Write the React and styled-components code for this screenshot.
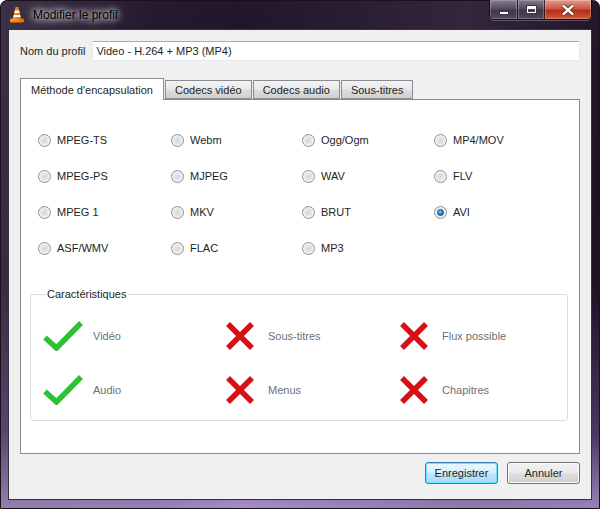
import React from "react";
import styled, { createGlobalStyle, css } from "styled-components";

const Global = createGlobalStyle`
  html, body {
    margin: 0;
    padding: 0;
    width: 600px;
    height: 509px;
    overflow: hidden;
    background: #ffffff;
  }
  * { box-sizing: border-box; }
`;

const Window = styled.div`
  width: 600px;
  height: 509px;
  display: flex;
  flex-direction: column;
  border-radius: 7px 7px 0 0;
  border: 1px solid #1a1020;
  padding: 0 7px 8px 7px;
  font-family: "Liberation Sans", Arial, sans-serif;
  font-size: 11px;
  color: #1e1e1e;
  background:
    linear-gradient(90deg, rgba(110,100,120,0.35) 0%, rgba(60,50,70,0.15) 25%, rgba(0,0,0,0) 40%, rgba(90,75,105,0.3) 78%, rgba(40,30,50,0.1) 100%),
    linear-gradient(180deg, #22162a 0%, #1b0f20 55%, #4d3866 85%, #a58ec9 100%);
`;

const TitleBar = styled.div`
  height: 28px;
  display: flex;
  align-items: flex-start;
`;

const AppIcon = styled.svg`
  width: 16px;
  height: 17px;
  margin: 5px 8px 0 1px;
  flex: none;
`;

const Caption = styled.div`
  margin-top: 7px;
  font-size: 12px;
  color: #000;
  text-shadow: 0 0 6px #fff, 0 0 10px rgba(255,255,255,0.8), 0 0 14px rgba(255,255,255,0.5);
`;

const Spacer = styled.div`
  flex: 1;
`;

const Controls = styled.div`
  display: flex;
  height: 20px;
  margin-top: -1px;
  border: 1px solid rgba(20, 10, 25, 0.9);
  border-top: none;
  border-radius: 0 0 5px 5px;
  overflow: hidden;
  box-shadow: 0 1px 0 rgba(255,255,255,0.25);
`;

const CtrlBtn = styled.div`
  width: ${(p) => (p.$close ? "47px" : "27px")};
  display: flex;
  align-items: center;
  justify-content: center;
  border-left: ${(p) => (p.$first ? "none" : "1px solid rgba(20,10,25,0.8)")};
  box-shadow: inset 0 0 0 1px rgba(255,255,255,0.25);
  background: ${(p) =>
    p.$close
      ? "linear-gradient(180deg, #e49a8c 0%, #cc5a45 45%, #b52d16 55%, #cf5a38 100%)"
      : "linear-gradient(180deg, rgba(220,215,225,0.5) 0%, rgba(150,140,160,0.4) 45%, rgba(90,80,100,0.45) 55%, rgba(130,120,140,0.45) 100%)"};
`;

const MinGlyph = styled.span`
  width: 10px;
  height: 4px;
  margin-top: 6px;
  background: #fff;
  border: 1px solid #3a3340;
`;

const MaxGlyph = styled.span`
  width: 11px;
  height: 9px;
  border: 1px solid #3a3340;
  box-shadow: inset 0 0 0 1px #fff, inset 0 2px 0 1px #fff;
  background: transparent;
`;

const Client = styled.div`
  flex: 1;
  background: #f0f0f0;
  border: 1px solid #3a2f42;
  display: flex;
  flex-direction: column;
  padding: 11px 11px 0 11px;
`;

const ProfileRow = styled.div`
  display: flex;
  align-items: center;
  gap: 7px;
`;

const Label = styled.label`
  color: #1e1e1e;
`;

const TextInput = styled.div`
  flex: 1;
  height: 20px;
  background: #fff;
  border: 1px solid #e3e9ef;
  border-top-color: #abadb3;
  display: flex;
  align-items: center;
  padding-left: 3px;
`;

const Tabs = styled.div`
  margin-top: 16px;
  display: flex;
  flex-direction: column;
`;

const TabBar = styled.div`
  display: flex;
  align-items: flex-end;
  height: 22px;
`;

const Tab = styled.div`
  height: ${(p) => (p.$active ? "22px" : "19px")};
  padding: 0 ${(p) => (p.$active ? "10px" : "9px")};
  margin-left: ${(p) => (p.$active ? "0" : "1px")};
  margin-bottom: ${(p) => (p.$active ? "-1px" : "0")};
  display: flex;
  align-items: center;
  border: 1px solid #898c95;
  border-bottom: ${(p) => (p.$active ? "none" : "1px solid #898c95")};
  position: relative;
  z-index: ${(p) => (p.$active ? 2 : 1)};
  background: ${(p) =>
    p.$active ? "#fff" : "linear-gradient(180deg, #f2f2f2 0%, #ebebeb 45%, #dddddd 55%, #cfcfcf 100%)"};
`;

const Panel = styled.div`
  height: 355px;
  background: #fff;
  border: 1px solid #898c95;
  padding: 30px 0 0 17px;
`;

const RadioGrid = styled.div`
  display: grid;
  grid-template-columns: 133px 131px 132px 132px;
  row-gap: 16px;
`;

const RadioItem = styled.div`
  height: 20px;
  display: flex;
  align-items: center;
  gap: 6px;
`;

const RadioCircle = styled.span`
  width: 13px;
  height: 13px;
  border-radius: 50%;
  border: 1px solid #8e8f8f;
  background: radial-gradient(circle at 50% 50%, #d8d8d8 0%, #e6e6e6 45%, #f7f7f7 100%);
  box-shadow: inset 0 0 0 1px #f4f4f4;
  position: relative;
  flex: none;
  ${(p) =>
    p.$checked &&
    css`
      &::after {
        content: "";
        position: absolute;
        left: 2px;
        top: 2px;
        width: 7px;
        height: 7px;
        border-radius: 50%;
        background: radial-gradient(circle at 40% 35%, #9fd4f7 0%, #2d89d0 45%, #11497e 100%);
        border: 1px solid #1c4e7f;
        box-sizing: border-box;
      }
    `}
`;

const Group = styled.fieldset`
  margin: 30px 0 0 -8px;
  width: 538px;
  height: 133px;
  border: 1px solid #d5dfe5;
  border-radius: 3px;
  padding: 21px 0 0 12px;
  min-width: 0;
`;

const Legend = styled.legend`
  padding: 0 2px 0 1px;
  margin-left: 3px;
  font-size: 11px;
  color: #1e1e1e;
`;

const FeatureGrid = styled.div`
  display: grid;
  grid-template-columns: 182px 174px 1fr;
  row-gap: 24px;
`;

const Feature = styled.div`
  height: 30px;
  display: flex;
  align-items: center;
  gap: ${(p) => (p.$ok ? "10px" : "13px")};
  color: #6f6f6f;
`;

const Footer = styled.div`
  display: flex;
  justify-content: flex-end;
  gap: 9px;
  margin-top: 8px;
`;

const Button = styled.button`
  width: 73px;
  height: 22px;
  font-family: "Liberation Sans", Arial, sans-serif;
  font-size: 11px;
  color: #1e1e1e;
  border-radius: 3px;
  padding: 0;
  border: 1px solid ${(p) => (p.$default ? "#3c7fb1" : "#707070")};
  background: ${(p) =>
    p.$default
      ? "linear-gradient(180deg, #eaf6fd 0%, #d9f0fc 45%, #bee6fd 55%, #a7d9f5 100%)"
      : "linear-gradient(180deg, #f2f2f2 0%, #ebebeb 45%, #dddddd 55%, #cfcfcf 100%)"};
  box-shadow: inset 0 0 0 1px ${(p) => (p.$default ? "#6ae0fa" : "#fcfcfc")};
`;

const VlcIcon = () => (
  <AppIcon viewBox="0 0 16 17">
    <defs>
      <linearGradient id="cone" x1="0" x2="1">
        <stop offset="0" stopColor="#ff9d1c" />
        <stop offset="1" stopColor="#e26a00" />
      </linearGradient>
    </defs>
    <path d="M1 13.5 Q1 12.5 3 12.5 L13 12.5 Q15 12.5 15 13.5 L15 15 Q15 16.5 13 16.5 L3 16.5 Q1 16.5 1 15 Z" fill="url(#cone)" />
    <path d="M6.6 1 L9.4 1 L12.4 13.5 L3.6 13.5 Z" fill="url(#cone)" />
    <path d="M5.9 4.5 L10.1 4.5 L10.7 7 L5.3 7 Z" fill="#fff" />
    <path d="M4.9 9 L11.1 9 L11.6 11 L4.4 11 Z" fill="#fff" />
  </AppIcon>
);

const CheckIcon = () => (
  <svg width="40" height="30" viewBox="0 0 40 30">
    <path d="M2 16.5 L13.5 27 L38 2" fill="none" stroke="#2bc236" strokeWidth="5.5" strokeLinejoin="miter" />
  </svg>
);

const CrossIcon = () => (
  <svg width="30" height="30" viewBox="0 0 30 30">
    <path d="M3 3 L27 27 M27 3 L3 27" fill="none" stroke="#d70f16" strokeWidth="5.5" />
  </svg>
);

const formats = [
  "MPEG-TS", "Webm", "Ogg/Ogm", "MP4/MOV",
  "MPEG-PS", "MJPEG", "WAV", "FLV",
  "MPEG 1", "MKV", "BRUT", "AVI",
  "ASF/WMV", "FLAC", "MP3",
];

const features = [
  { label: "Vidéo", ok: true },
  { label: "Sous-titres", ok: false },
  { label: "Flux possible", ok: false },
  { label: "Audio", ok: true },
  { label: "Menus", ok: false },
  { label: "Chapitres", ok: false },
];

const tabs = ["Méthode d'encapsulation", "Codecs vidéo", "Codecs audio", "Sous-titres"];

export default function App() {
  return (
    <>
      <Global />
      <Window>
        <TitleBar>
          <VlcIcon />
          <Caption>Modifier le profil</Caption>
          <Spacer />
          <Controls>
            <CtrlBtn $first><MinGlyph /></CtrlBtn>
            <CtrlBtn><MaxGlyph /></CtrlBtn>
            <CtrlBtn $close>
              <svg width="14" height="12" viewBox="0 0 14 12">
                <path d="M2 1.5 L12 10.5 M12 1.5 L2 10.5" stroke="#3a1a14" strokeWidth="4" />
                <path d="M2 1.5 L12 10.5 M12 1.5 L2 10.5" stroke="#fff" strokeWidth="2.4" />
              </svg>
            </CtrlBtn>
          </Controls>
        </TitleBar>
        <Client>
          <ProfileRow>
            <Label>Nom du profil</Label>
            <TextInput>Video - H.264 + MP3 (MP4)</TextInput>
          </ProfileRow>
          <Tabs>
            <TabBar>
              {tabs.map((t, i) => (
                <Tab key={t} $active={i === 0}>{t}</Tab>
              ))}
            </TabBar>
            <Panel>
              <RadioGrid>
                {formats.map((f) => (
                  <RadioItem key={f}>
                    <RadioCircle $checked={f === "AVI"} />
                    {f}
                  </RadioItem>
                ))}
              </RadioGrid>
              <Group>
                <Legend>Caractéristiques</Legend>
                <FeatureGrid>
                  {features.map((f) => (
                    <Feature key={f.label} $ok={f.ok}>
                      {f.ok ? <CheckIcon /> : <CrossIcon />}
                      {f.label}
                    </Feature>
                  ))}
                </FeatureGrid>
              </Group>
            </Panel>
          </Tabs>
          <Footer>
            <Button $default>Enregistrer</Button>
            <Button>Annuler</Button>
          </Footer>
        </Client>
      </Window>
    </>
  );
}
